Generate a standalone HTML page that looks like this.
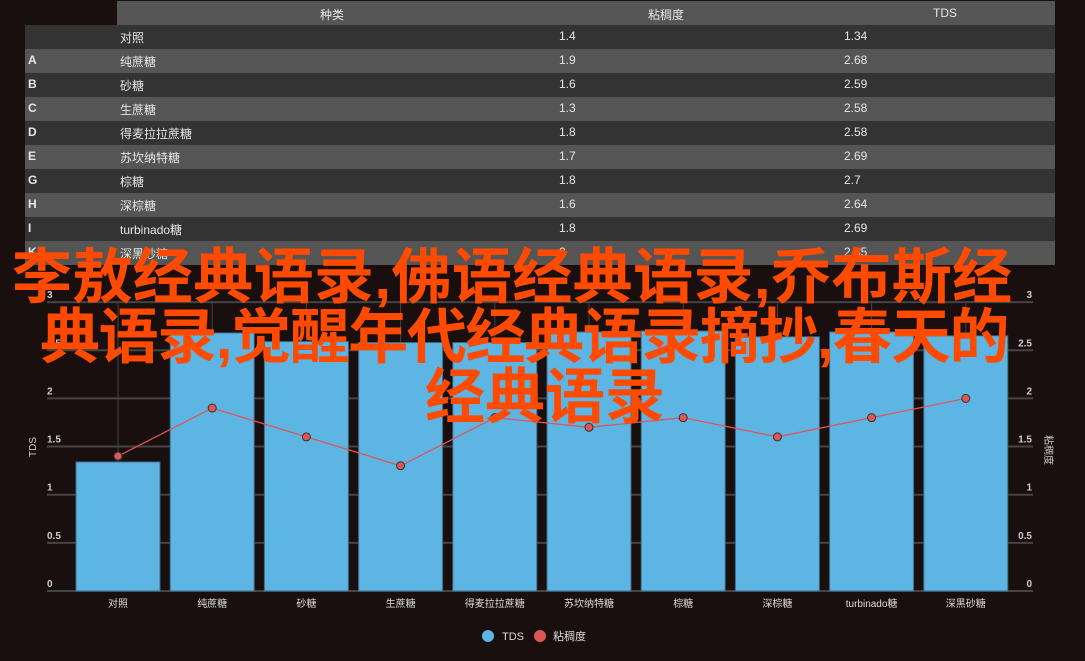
<!DOCTYPE html>
<html><head><meta charset="utf-8"><style>
body{margin:0;width:1085px;height:661px;background:#1a0f0f;overflow:hidden;position:relative;font-family:"Liberation Sans","Noto Sans CJK SC",sans-serif;}
.r{position:absolute;left:25px;width:1030px;height:24px;font-size:12px;color:#e6e6e6;}
.r span{position:absolute;top:4px;}
.t{position:absolute;white-space:nowrap;font-size:60px;line-height:60px;font-weight:bold;color:#ff4a00;font-family:"Liberation Sans","Noto Sans CJK SC",sans-serif;}
</style></head><body>
<div style="position:absolute;left:117px;top:1px;width:938px;height:24px;background:#555;font-size:12px;color:#e6e6e6">
<span style="position:absolute;left:203px;top:5px">种类</span>
<span style="position:absolute;left:531px;top:5px">粘稠度</span>
<span style="position:absolute;left:816px;top:5px">TDS</span>
</div>
<div id="rows"></div>
<svg style="position:absolute;left:0;top:0" width="1085" height="661" font-family="Liberation Sans, Noto Sans CJK SC, sans-serif">
<g id="g"></g>
</svg>
<div class="t" style="left:12px;top:248px;letter-spacing:0.4px">李敖经典语录,佛语经典语录,乔布斯经</div>
<div class="t" style="left:40px;top:308px;letter-spacing:-1.4px">典语录,觉醒年代经典语录摘抄,春天的</div>
<div class="t" style="left:425px;top:368px">经典语录</div>
<script>
var d=[["","对照",1.4,1.34],["A","纯蔗糖",1.9,2.68],["B","砂糖",1.6,2.59],["C","生蔗糖",1.3,2.58],["D","得麦拉拉蔗糖",1.8,2.58],["E","苏坎纳特糖",1.7,2.69],["G","棕糖",1.8,2.7],["H","深棕糖",1.6,2.64],["I","turbinado糖",1.8,2.69],["K","深黑砂糖",2,2.65]];
var h="";
d.forEach(function(r,i){h+='<div class="r" style="top:'+(25+i*24)+'px;background:'+(i%2?'#555':'#333')+'"><span style="left:3px;font-weight:bold">'+r[0]+'</span><span style="left:95px">'+r[1]+'</span><span style="left:534px">'+r[2]+'</span><span style="left:819px">'+r[3]+'</span></div>';});
document.getElementById("rows").innerHTML=h;
var s="";var y0=591,k=96.3;
for(var v=0;v<=3;v+=0.5){var y=y0-v*k;s+='<line x1="47" x2="1033" y1="'+y+'" y2="'+y+'" stroke="#444" stroke-width="2"/>';
s+='<text x="47" y="'+(y-4)+'" font-size="10" font-weight="bold" fill="#ccc">'+v+'</text>';
s+='<text x="1032" y="'+(y-4)+'" font-size="10" font-weight="bold" fill="#ccc" text-anchor="end">'+v+'</text>';}
var pts=[];
d.forEach(function(r,i){var cx=118+i*94.2;s+='<line x1="'+cx+'" x2="'+cx+'" y1="302" y2="591" stroke="#444"/>';
var top=y0-r[3]*k;s+='<rect x="'+(cx-42)+'" y="'+top+'" width="84" height="'+(y0-top)+'" fill="#5db5e4" stroke="#3d6b86" stroke-width="1"/>';
s+='<text x="'+cx+'" y="607" font-size="10" fill="#ddd" text-anchor="middle">'+r[1]+'</text>';
pts.push(cx+','+(y0-r[2]*k));});
s+='<polyline points="'+pts.join(' ')+'" fill="none" stroke="#e05555" stroke-width="1.3"/>';
pts.forEach(function(p){var a=p.split(',');s+='<circle cx="'+a[0]+'" cy="'+a[1]+'" r="4" fill="#e05555" stroke="#333" stroke-width="1"/>';});
s+='<text transform="translate(36,447) rotate(-90)" font-size="10" fill="#ccc" text-anchor="middle">TDS</text>';
s+='<text transform="translate(1045,450) rotate(90)" font-size="10" fill="#ccc" text-anchor="middle">粘稠度</text>';
s+='<circle cx="488" cy="636" r="6" fill="#5db5e4"/><text x="502" y="640" font-size="11" fill="#ddd">TDS</text>';
s+='<circle cx="540" cy="636" r="6" fill="#e05555"/><text x="553" y="640" font-size="11" fill="#ddd">粘稠度</text>';
document.getElementById("g").innerHTML=s;
</script>
</body></html>
